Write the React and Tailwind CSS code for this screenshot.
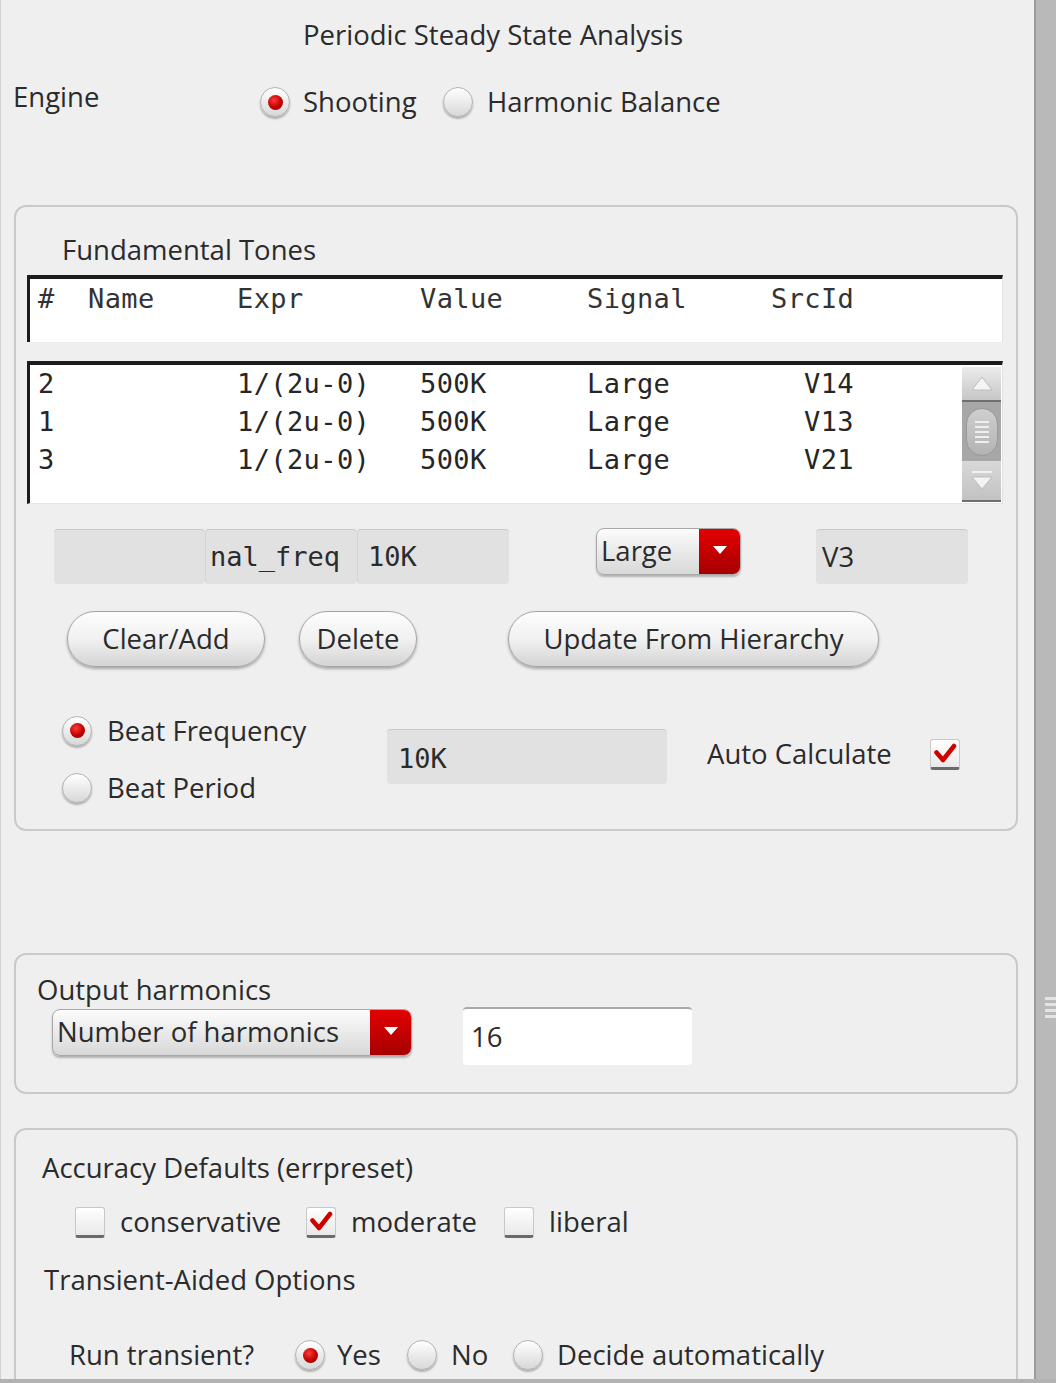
import React from "react";

function Radio({ checked }) {
  return (
    <span className="w-[30px] h-[30px] shrink-0 rounded-full border border-[#b3b3b3] bg-linear-to-b from-[#ffffff] to-[#d8d8d8] shadow-[0_2px_2px_rgba(0,0,0,0.28)] flex items-center justify-center">
      {checked && (
        <span className="w-[15px] h-[15px] rounded-full bg-[radial-gradient(circle_at_40%_35%,#ff3a3a,#c00000_55%,#8a0000)]" />
      )}
    </span>
  );
}

function Check({ checked }) {
  return (
    <span className="w-[30px] h-[31px] shrink-0 rounded-[3px] border border-[#c8c8c8] border-b-[3px] border-b-[#6a6a6a] bg-linear-to-b from-[#ffffff] to-[#e9e9e9] flex items-center justify-center">
      {checked && (
        <svg width="24" height="22" viewBox="0 0 24 22">
          <path
            d="M3.5 10.5 L10 18 L21 4"
            fill="none"
            stroke="#d00000"
            strokeWidth="4.5"
            strokeLinecap="round"
            strokeLinejoin="round"
          />
        </svg>
      )}
    </span>
  );
}

function Dropdown({ label, className }) {
  return (
    <div
      className={
        "flex h-[47px] rounded-[8px] border border-[#a8a8a8] shadow-[0_2px_2px_rgba(0,0,0,0.25)] overflow-hidden bg-linear-to-b from-[#fcfcfc] to-[#d8d8d8] " +
        className
      }
    >
      <span className="flex-1 pl-[4px] leading-[44px] whitespace-nowrap overflow-hidden">
        {label}
      </span>
      <span className="w-[41px] bg-linear-to-b from-[#e40000] to-[#a60000] flex items-start justify-center pt-[16px]">
        <svg width="16" height="10" viewBox="0 0 16 10">
          <polygon points="1,1 15,1 8,9" fill="#ffffff" />
        </svg>
      </span>
    </div>
  );
}

function Button({ children, className }) {
  return (
    <div
      className={
        "h-[56px] rounded-full border border-[#a5a5a5] bg-linear-to-b from-[#fdfdfd] via-[#f1f1f1] to-[#d4d4d4] shadow-[0_2px_3px_rgba(0,0,0,0.3)] flex items-center justify-center whitespace-nowrap " +
        className
      }
    >
      {children}
    </div>
  );
}

function Field({ children, className }) {
  return (
    <div
      className={
        "h-[55px] bg-[#e1e1e1] rounded-[4px] border-t border-[#c8c8c8] flex items-center whitespace-nowrap overflow-hidden " +
        className
      }
    >
      {children}
    </div>
  );
}

const rows = [
  ["2", "1/(2u-0)", "500K", "Large", "V14"],
  ["1", "1/(2u-0)", "500K", "Large", "V13"],
  ["3", "1/(2u-0)", "500K", "Large", "V21"],
];

export default function App() {
  return (
    <div className="w-[1056px] h-[1383px] overflow-hidden bg-[#efefef] flex flex-col font-['Open_Sans',sans-serif] text-[27.5px] text-[#2b2b2b]">
      <div className="flex h-[1379px] shrink-0">
        <div className="w-[1034px] h-full overflow-hidden border-l border-[#d2d2d2] flex flex-col">
          {/* Title */}
          <div className="pt-[17px] h-[53px] shrink-0 pl-[302px] leading-[36px] whitespace-nowrap">
            Periodic Steady State Analysis
          </div>

          {/* Engine row */}
          <div className="mt-[26px] flex h-[41px] shrink-0">
            <span className="pl-[12px] w-[258px] leading-[36px]">Engine</span>
            <div className="mt-[5px] h-[36px] flex items-center">
              <span className="ml-[1px]">
                <Radio checked />
              </span>
              <span className="ml-[13px] w-[140px] whitespace-nowrap">Shooting</span>
              <Radio />
              <span className="ml-[14px] whitespace-nowrap">Harmonic Balance</span>
            </div>
          </div>

          {/* Panel 1: Fundamental Tones */}
          <div className="mt-[85px] ml-[13px] w-[1004px] h-[626px] shrink-0 border-2 border-[#c9c9c9] rounded-[12px] flex flex-col">
            <div className="mt-[25px] ml-[46px] leading-[36px]">Fundamental Tones</div>

            {/* header box */}
            <div className="mt-[7px] ml-[11px] w-[976px] h-[67px] shrink-0 bg-white border-t-4 border-l-[3px] border-[#1c1c1c] border-r border-r-[#e2e2e2] font-['DejaVu_Sans_Mono',monospace] slashed-zero text-[27px] tracking-[0.4px] text-[#333333]">
              <div className="flex pl-[8px] pt-[2px] leading-[36px] whitespace-nowrap">
                <span className="w-[50px]">#</span>
                <span className="w-[149px]">Name</span>
                <span className="w-[183px]">Expr</span>
                <span className="w-[167px]">Value</span>
                <span className="w-[184px]">Signal</span>
                <span>SrcId</span>
              </div>
            </div>

            {/* data box */}
            <div className="mt-[19px] ml-[11px] w-[976px] h-[143px] shrink-0 bg-white border-t-4 border-l-[3px] border-[#1c1c1c] border-r border-r-[#e2e2e2] border-b border-b-[#e6e6e6] flex font-['DejaVu_Sans_Mono',monospace] slashed-zero text-[27px] tracking-[0.4px] text-[#262626]">
              <div className="flex-1 pl-[8px]">
                {rows.map((r, i) => (
                  <div key={i} className="flex h-[38px] leading-[38px] whitespace-nowrap">
                    <span className="w-[199px]">{r[0]}</span>
                    <span className="w-[183px]">{r[1]}</span>
                    <span className="w-[167px]">{r[2]}</span>
                    <span className="w-[217px]">{r[3]}</span>
                    <span>{r[4]}</span>
                  </div>
                ))}
              </div>
              {/* scrollbar */}
              <div className="w-[39px] mt-[2px] mb-[1px] mr-[1px] flex flex-col">
                <div className="h-[35px] bg-linear-to-b from-[#ececec] to-[#c6c6c6] border-b-2 border-[#6e6e6e] flex items-center justify-center">
                  <svg width="22" height="15" viewBox="0 0 22 15">
                    <polygon points="11,1 21,14 1,14" fill="#f4f4f4" stroke="#bdbdbd" strokeWidth="1" />
                  </svg>
                </div>
                <div className="h-[59px] bg-[#a7a7a7] flex items-center justify-center">
                  <div className="w-[32px] h-[48px] rounded-full bg-linear-to-b from-[#cfcfcf] to-[#b3b3b3] border border-[#999999] flex flex-col items-center justify-center gap-[3px]">
                    <span className="w-[14px] h-[2px] bg-[#efefef]" />
                    <span className="w-[14px] h-[2px] bg-[#efefef]" />
                    <span className="w-[14px] h-[2px] bg-[#efefef]" />
                    <span className="w-[14px] h-[2px] bg-[#efefef]" />
                    <span className="w-[14px] h-[2px] bg-[#efefef]" />
                  </div>
                </div>
                <div className="flex-1 bg-linear-to-b from-[#d8d8d8] to-[#c2c2c2] border-b-2 border-[#6e6e6e] flex flex-col items-center justify-center gap-[3px]">
                  <span className="w-[20px] h-[2px] bg-[#f0f0f0]" />
                  <svg width="22" height="14" viewBox="0 0 22 14">
                    <polygon points="1,1 21,1 11,13" fill="#f4f4f4" stroke="#bdbdbd" strokeWidth="1" />
                  </svg>
                </div>
              </div>
            </div>

            {/* input row */}
            <div className="mt-[25px] flex items-start h-[55px] shrink-0">
              <Field className="ml-[38px] w-[151px]" />
              <Field className="w-[152px] border-l border-l-[#d3d3d3] pl-[4px] font-['DejaVu_Sans_Mono',monospace] slashed-zero text-[27px]">
                nal_freq
              </Field>
              <Field className="w-[152px] border-l border-l-[#d3d3d3] pl-[10px] font-['DejaVu_Sans_Mono',monospace] slashed-zero text-[27px]">
                10K
              </Field>
              <Dropdown label="Large" className="ml-[87px] -mt-[1px] w-[145px]" />
              <Field className="ml-[75px] w-[152px] pl-[6px]">V3</Field>
            </div>

            {/* buttons */}
            <div className="mt-[27px] flex h-[56px] shrink-0">
              <Button className="ml-[51px] w-[198px]">Clear/Add</Button>
              <Button className="ml-[34px] w-[118px]">Delete</Button>
              <Button className="ml-[91px] w-[371px]">Update From Hierarchy</Button>
            </div>

            {/* beat */}
            <div className="mt-[35px] flex items-start">
              <div className="ml-[46px] w-[325px] flex flex-col">
                <div className="h-[57px] flex items-center">
                  <Radio checked />
                  <span className="ml-[15px] whitespace-nowrap">Beat Frequency</span>
                </div>
                <div className="h-[57px] flex items-center">
                  <Radio />
                  <span className="ml-[15px] whitespace-nowrap">Beat Period</span>
                </div>
              </div>
              <Field className="mt-[27px] w-[280px] pl-[11px] font-['DejaVu_Sans_Mono',monospace] slashed-zero text-[27px]">
                <span className="mt-[4px]">10K</span>
              </Field>
              <div className="mt-[34px] h-[36px] flex items-center">
                <span className="ml-[40px] w-[223px] whitespace-nowrap">Auto Calculate</span>
                <Check checked />
              </div>
            </div>
          </div>

          {/* Panel 2: Output harmonics */}
          <div className="mt-[122px] ml-[13px] w-[1004px] h-[141px] shrink-0 border-2 border-[#c9c9c9] rounded-[12px] flex flex-col">
            <div className="mt-[18px] ml-[21px] leading-[34px]">Output harmonics</div>
            <div className="flex items-start">
              <Dropdown label="Number of harmonics" className="ml-[36px] mt-[2px] w-[360px]" />
              <div className="ml-[51px] w-[229px] h-[58px] bg-white rounded-[4px] border-t-2 border-[#a9a9a9] flex items-center pl-[8px]">
                16
              </div>
            </div>
          </div>

          {/* Panel 3: Accuracy */}
          <div className="mt-[34px] ml-[13px] w-[1004px] h-[300px] shrink-0 border-2 border-[#c9c9c9] rounded-[12px] flex flex-col">
            <div className="mt-[20px] ml-[26px] leading-[36px]">Accuracy Defaults (errpreset)</div>
            <div className="mt-[18px] ml-[59px] h-[36px] flex items-center">
              <Check />
              <span className="ml-[15px] w-[186px] whitespace-nowrap">conservative</span>
              <Check checked />
              <span className="ml-[15px] w-[153px] whitespace-nowrap">moderate</span>
              <Check />
              <span className="ml-[15px] whitespace-nowrap">liberal</span>
            </div>
            <div className="mt-[22px] ml-[28px] leading-[36px]">Transient-Aided Options</div>
            <div className="mt-[39px] ml-[53px] h-[36px] flex items-center">
              <span className="w-[226px] whitespace-nowrap">Run transient?</span>
              <Radio checked />
              <span className="ml-[12px] w-[70px] whitespace-nowrap">Yes</span>
              <Radio />
              <span className="ml-[14px] w-[62px] whitespace-nowrap">No</span>
              <Radio />
              <span className="ml-[14px] whitespace-nowrap">Decide automatically</span>
            </div>
          </div>
        </div>

        {/* right strip */}
        <div className="w-[22px] h-full border-l-2 border-[#9c9c9c] bg-[#b9b9b9] flex flex-col">
          <div className="mt-[997px] ml-[9px] flex flex-col gap-[3px]">
            <span className="h-[3px] bg-[#e4e4e4]" />
            <span className="h-[3px] bg-[#e4e4e4]" />
            <span className="h-[3px] bg-[#e4e4e4]" />
            <span className="h-[3px] bg-[#e4e4e4]" />
          </div>
        </div>
      </div>
      <div className="h-[4px] bg-[#b2b2b2] shrink-0" />
    </div>
  );
}
